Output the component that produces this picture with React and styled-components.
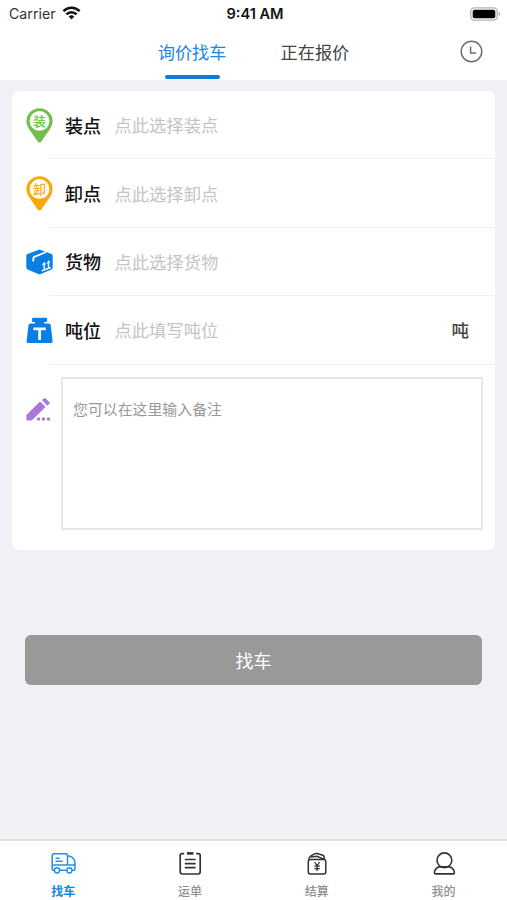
import React, { useState } from 'react';
import styled, { createGlobalStyle } from 'styled-components';

const GlobalStyle = createGlobalStyle`
  * {
    box-sizing: border-box;
  }

  body {
    margin: 0;
    background: #f0f0f5;
    font-family: Inter, 'Noto Sans CJK SC', sans-serif;
  }
`;

const Page = styled.div`
  width: 100%;
  height: 100vh;
  display: flex;
  flex-direction: column;
  overflow: hidden;
  background: #f0f0f5;
`;

const StatusBar = styled.div`
  height: 27px;
  flex: none;
  display: grid;
  grid-template-columns: 1fr auto 1fr;
  align-items: center;
  padding: 0 6px 0 9px;
  background: #fff;
  color: #111;
  font-size: 14px;
  line-height: 28px;
`;

const Carrier = styled.div`
  display: flex;
  align-items: center;
  gap: 6px;
  color: #333;
  font-size: 14.2px;

  svg {
    margin-top: -2px;
  }
`;

const Time = styled.div`
  font-weight: 600;
  font-size: 14.6px;
`;

const Battery = styled.div`
  display: flex;
  justify-content: flex-end;
`;

const Header = styled.div`
  height: 52.5px;
  flex: none;
  display: grid;
  grid-template-columns: 1fr auto 1fr;
  padding-right: 24px;
  padding-left: 24px;
  background: #fff;
`;

const Tabs = styled.div`
  grid-column: 2;
  display: flex;
  gap: 54px;
`;

const Tab = styled.div`
  height: 52px;
  display: flex;
  flex-direction: column;
  align-items: center;
  color: ${({ $active }) => ($active ? '#1e87e0' : '#444')};
  font-size: 17.2px;
  line-height: 48px;
  cursor: pointer;

  span {
    height: 48px;
    padding-top: 2px;
  }

  &::after {
    content: '';
    width: 55px;
    height: 4px;
    border-radius: 2px;
    background: ${({ $active }) => ($active ? '#0f7bd8' : 'transparent')};
  }
`;

const History = styled.div`
  display: flex;
  justify-content: flex-end;
  padding-top: 13px;
`;

const Card = styled.div`
  flex: none;
  height: 459px;
  margin: 11.5px 12px 0;
  border-radius: 7px;
  background: #fff;
`;

const Row = styled.div`
  height: 68.4px;
  display: flex;
  align-items: center;
  padding-left: 14px;
`;

const IconBox = styled.div`
  width: 27px;
  flex: none;
  display: flex;
  justify-content: center;
`;

const RowBody = styled.div`
  flex: 1;
  height: 100%;
  display: flex;
  align-items: center;
  margin-left: -4px;
  padding: 0 26px 0 16px;
  border-bottom: 1px solid #f0f0f0;
`;

const Label = styled.div`
  width: 49.5px;
  color: #111;
  font-size: 18px;
  font-weight: 500;
`;

const Placeholder = styled.div`
  flex: 1;
  color: #c4c4c4;
  font-size: 17.3px;
`;

const Unit = styled.div`
  color: #444;
  font-size: 17.5px;
  font-weight: 500;
`;

const Remark = styled.div`
  display: flex;
  align-items: flex-start;
  padding: 12px 12px 0 14px;
`;

const RemarkIcon = styled.div`
  width: 35px;
  flex: none;
  padding-top: 20px;
`;

const TextArea = styled.textarea`
  flex: 1;
  height: 153px;
  padding: 20px 10px;
  border: 2px solid #e6e6e6;
  outline: none;
  resize: none;
  background: #fff;
  color: #333;
  font-family: inherit;
  font-size: 14.9px;
  line-height: 22px;

  &::placeholder {
    color: #999;
    opacity: 1;
  }
`;

const Submit = styled.button`
  flex: none;
  height: 50px;
  margin: 85px 25px 0;
  padding: 0;
  border: 0;
  border-radius: 6px;
  background: #999;
  color: #fff;
  font-family: inherit;
  font-size: 18px;
`;

const TabBar = styled.div`
  flex: none;
  height: 61px;
  margin-top: auto;
  display: grid;
  grid-template-columns: repeat(4, 1fr);
  border-top: 2px solid #e2e2e6;
  background: #fff;
`;

const TabItem = styled.div`
  display: flex;
  flex-direction: column;
  align-items: center;
  padding-top: 9.5px;
  color: ${({ $active }) => ($active ? '#1683ee' : '#909090')};
  font-size: 12px;
  font-weight: ${({ $active }) => ($active ? 700 : 500)};
  line-height: 18px;

  svg {
    margin-bottom: 7px;
  }
`;

function WifiIcon() {
  return (
    <svg width="19" height="14" viewBox="0 0 18 14" fill="none" stroke="#111" strokeWidth="2.5">
      <path d="M.9 5.2C5.4.5 12.6.5 17.1 5.2" />
      <path d="M3.9 8.3c2.8-2.9 7.4-2.9 10.2 0" />
      <path d="M6.2 10.5c1.6-1.6 4-1.6 5.6 0L9 13.6z" fill="#111" stroke="none" />
    </svg>
  );
}

function BatteryIcon() {
  return (
    <svg width="31" height="14" viewBox="0 0 31 14">
      <rect x=".8" y=".8" width="26.4" height="12.4" rx="3.6" fill="#fff" stroke="#b4b4b4" strokeWidth="1.3" />
      <rect x="2.7" y="2.7" width="22.6" height="8.6" rx="2" fill="#000" />
      <path d="M28.7 4.8c2 .5 2 3.9 0 4.4z" fill="#b4b4b4" />
    </svg>
  );
}

function ClockIcon() {
  return (
    <svg width="23" height="23" viewBox="0 0 23 23" fill="none" stroke="#707070" strokeWidth="1.5">
      <circle cx="11.5" cy="11.5" r="10.3" />
      <path d="M10.6 6.6v6.4h5.6" />
    </svg>
  );
}

function PinIcon({ text, color }) {
  return (
    <svg width="27" height="35" viewBox="0 0 27 35">
      <path
        d="M13.5.3C6.2.3.4 6 .4 13.1c0 2.9 1 5.3 2.6 7.9l8.7 12.6c.9 1.2 2.7 1.2 3.6 0L24 21c1.6-2.6 2.6-5 2.6-7.9C26.6 6 20.8.3 13.5.3z"
        fill={color}
      />
      <circle cx="13.5" cy="12.9" r="9.9" fill="#fff" />
      <text
        x="13.5"
        y="17.7"
        fill={color}
        fontFamily="Noto Sans CJK SC, sans-serif"
        fontSize="13"
        fontWeight="500"
        textAnchor="middle"
      >
        {text}
      </text>
    </svg>
  );
}

function BoxIcon() {
  return (
    <svg width="27" height="26" viewBox="0 0 27 26">
      <path
        d="M12.3.9q1.2-.6 2.4 0l10.8 4.2q1.2.5 1.2 1.7v11.7q0 1.3-1.2 1.9l-10.8 4.7q-1.2.5-2.4 0L1.5 20.4Q.3 19.8.3 18.5V6.8Q.3 5.6 1.5 5.1z"
        fill="#087fe5"
      />
      <path d="M7.3 12.4V9.4q0-1 1-1.5L20.2 3" fill="none" stroke="#fff" strokeWidth="1.8" />
      <path
        d="M18.2 20v-5.600M22.500 18.400v-5.600M15.700 21.800l9-3.300"
        fill="none"
        stroke="#fff"
        strokeWidth="1.400"
      />
      <path d="m15.900 16.600 2.300-3.800 1.700 2.400zM20.400 14.900l2.200-3.700 1.800 2.200z" fill="#fff" />
    </svg>
  );
}

function WeightIcon() {
  return (
    <svg width="27" height="27" viewBox="0 0 27 27" fill="#087fe5">
      <path d="M7.3.7h12.6q1.2 0 1.2 1.2v2q0 1.2-1.2 1.2h-1.7v1.3h4.5q1.7 0 2 1.7l1.9 16.1q.2 1.9-1.6 1.9H2.2q-1.8 0-1.6-1.9L2.5 8.1q.3-1.7 2-1.7H9V5.1H7.300q-1.200 0-1.200-1.200v-2q0-1.200 1.200-1.200z" />
      <path d="M7.400 11.900h12.400M13.600 11.900v11" fill="none" stroke="#fff" strokeWidth="2.700" />
    </svg>
  );
}

function PencilIcon() {
  return (
    <svg width="25" height="25" viewBox="0 0 25 25" fill="#aa78dc">
      <path d="M.4 18 13.500 4.900q.6-.5 1.200 0l4.300 4.300q.5.600 0 1.200L6.500 22.800q-.6.600-1.400.6H1.200q-.8 0-.8-.8z" />
      <path d="m16 3.300 2-2q.7-.7 1.500 0l3.900 3.900q.7.800 0 1.500l-2 2z" />
      <rect x="11.100" y="20.400" width="3" height="3" rx=".6" />
      <rect x="16" y="20.400" width="3" height="3" rx=".6" />
      <rect x="21" y="20.400" width="3" height="3" rx=".6" />
    </svg>
  );
}

function TruckIcon() {
  return (
    <svg width="26" height="25" viewBox="0 0 26 25" fill="none" stroke="#2b8de4" strokeWidth="1.5">
      <path d="M4.600 19.200H4Q2.200 19.200 2.200 17.400V4.800Q2.200 2.800 4.200 2.800H15.700Q17.500 2.800 17.500 4.600V13.900" />
      <path d="M17.500 5h1.200c3.600 0 6.300 3.800 6.300 7v5.400q0 1.800-1.800 1.800h-1.100M9.500 19.200h7.300M2.200 13.900H25" />
      <circle cx="7" cy="19.300" r="2.600" />
      <circle cx="19.400" cy="19.300" r="2.600" />
      <path d="M5.600 7.200h4M5.600 10.200h7" />
    </svg>
  );
}

function WaybillIcon() {
  return (
    <svg width="26" height="25" viewBox="0 0 26 25" fill="none" stroke="#333" strokeWidth="1.7">
      <path d="M7.200 2.600H5.200Q3.200 2.600 3.200 4.600v16.200q0 2.200 2.200 2.200h15.600q2.200 0 2.200-2.200V4.600q0-2-2-2h-2" />
      <path d="M10 2.400h6.400" strokeWidth="2.600" />
      <path d="M7.800 8.500h10.800M7.800 12.600h10.800M7.800 16.700h10.800" />
    </svg>
  );
}

function WalletIcon() {
  return (
    <svg width="26" height="25" viewBox="0 0 26 25" fill="none" stroke="#333" strokeWidth="1.5">
      <rect x="4.300" y="8.500" width="17.500" height="14.500" rx="2" />
      <path d="M5 8.700Q4.900 6 6.900 4.900l3.600-2.100q1.200-.6 2.600-.3l5.800 1.700q1.300.5 1.300 1.700v2.600M6.800 6l6.200-.7 6.800 2.900" />
      <path d="m10.600 11 2.500 3.800 2.500-3.800M10.400 15.100h5.400M10.400 17.600h5.400M13.100 14.800v5.300" strokeWidth="1.300" />
    </svg>
  );
}

function UserIcon() {
  return (
    <svg width="26" height="25" viewBox="0 0 26 25" fill="none" stroke="#333" strokeWidth="1.6">
      <circle cx="13.400" cy="9.300" r="7.400" />
      <path d="M8.300 15.900h10.200c2.400.5 4.900 2.900 4.900 5.800q0 1.200-1.200 1.200H4.600q-1.200 0-1.200-1.200c0-2.900 2.500-5.300 4.900-5.800z" />
    </svg>
  );
}

const tabs = ['询价找车', '正在报价'];

const rows = [
  { label: '装点', placeholder: '点此选择装点', icon: <PinIcon text="装" color="#72bf4b" /> },
  { label: '卸点', placeholder: '点此选择卸点', icon: <PinIcon text="卸" color="#faa80a" /> },
  { label: '货物', placeholder: '点此选择货物', icon: <BoxIcon /> },
  { label: '吨位', placeholder: '点此填写吨位', icon: <WeightIcon />, unit: '吨' },
];

const navs = [
  { label: '找车', icon: <TruckIcon /> },
  { label: '运单', icon: <WaybillIcon /> },
  { label: '结算', icon: <WalletIcon /> },
  { label: '我的', icon: <UserIcon /> },
];

function App() {
  const [tab, setTab] = useState(0);
  const [remark, setRemark] = useState('');

  return (
    <Page>
      <GlobalStyle />
      <StatusBar>
        <Carrier>
          Carrier
          <WifiIcon />
        </Carrier>
        <Time>9:41 AM</Time>
        <Battery>
          <BatteryIcon />
        </Battery>
      </StatusBar>
      <Header>
        <Tabs>
          {tabs.map((name, idx) => (
            <Tab key={name} $active={idx === tab} onClick={() => setTab(idx)}>
              <span>{name}</span>
            </Tab>
          ))}
        </Tabs>
        <History>
          <ClockIcon />
        </History>
      </Header>
      <Card>
        {rows.map((row) => (
          <Row key={row.label}>
            <IconBox>{row.icon}</IconBox>
            <RowBody>
              <Label>{row.label}</Label>
              <Placeholder>{row.placeholder}</Placeholder>
              {row.unit && <Unit>{row.unit}</Unit>}
            </RowBody>
          </Row>
        ))}
        <Remark>
          <RemarkIcon>
            <PencilIcon />
          </RemarkIcon>
          <TextArea
            placeholder="您可以在这里输入备注"
            value={remark}
            onChange={(e) => setRemark(e.target.value)}
          />
        </Remark>
      </Card>
      <Submit type="button">找车</Submit>
      <TabBar>
        {navs.map((nav, idx) => (
          <TabItem key={nav.label} $active={idx === 0}>
            {nav.icon}
            {nav.label}
          </TabItem>
        ))}
      </TabBar>
    </Page>
  );
}

export default App;
